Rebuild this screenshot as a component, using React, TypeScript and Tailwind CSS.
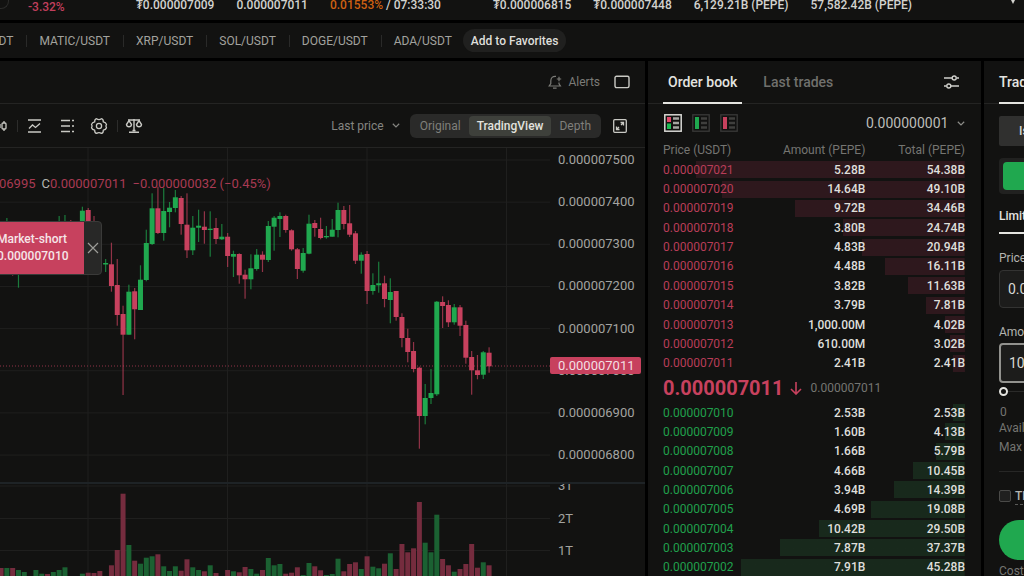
import React from 'react';

type Side = 'r' | 'g';
// index, side, high, low, body top, body bottom
type Candle = [number, Side, number, number, number, number];
// index, side, top of the bar
type Volume = [number, Side, number];
// price, amount, total
type Level = [string, string, string];

const STEP = 5.81;
const ORIGIN = 88.2;
const DEPTH_SCALE = 61.1;

const tickers = [
  { value: '₮0.000007009', width: 'min-w-[77px]' },
  { value: '0.000007011', width: 'min-w-[69px]' },
  { value: '0.01553%', extra: ' / 07:33:30', width: 'min-w-[141px]' },
  { value: '₮0.000006815', width: 'min-w-[77px]' },
  { value: '₮0.000007448', width: 'min-w-[77px]' },
  { value: '6,129.21B (PEPE)', width: 'min-w-[93px]' },
  { value: '57,582.42B (PEPE)', width: 'min-w-[99px]' },
];

const pairs = ['ETH/USDT', 'MATIC/USDT', 'XRP/USDT', 'SOL/USDT', 'DOGE/USDT', 'ADA/USDT'];

const candles: Candle[] = [
  [-14, 'g', 218, 240, 226, 236], [-13, 'r', 240, 275.7, 246, 262], [-12, 'g', 240, 287.7, 246, 262],
  [-5, 'g', 216, 250, 226, 240], [-4, 'g', 215, 250, 226, 240], [-3, 'r', 220, 250, 226, 240],
  [-1, 'g', 206.7, 240, 210.7, 230], [0, 'r', 208, 250, 210, 240], [1, 'r', 216, 262, 226, 250],
  [3, 'g', 259, 272, 263, 264.5], [4, 'r', 242.7, 291.7, 264.3, 286], [5, 'r', 259, 325.7, 285, 315],
  [6, 'r', 305.7, 395, 314, 334.7], [7, 'g', 284.7, 334.7, 291.7, 334.7], [8, 'r', 288, 339.3, 291.3, 309.3],
  [9, 'g', 265.3, 310, 279.7, 310], [10, 'g', 229.7, 281.3, 243, 280], [11, 'g', 193.3, 245, 208.3, 244],
  [12, 'r', 186.7, 234, 208.3, 233], [13, 'g', 188, 240.7, 211, 233], [14, 'g', 202, 227.3, 207.7, 212],
  [15, 'g', 190, 212.3, 197.3, 208], [16, 'r', 196, 234.7, 198, 224], [17, 'r', 193.3, 258, 224.7, 250.3],
  [18, 'g', 216, 255, 227.7, 250.3], [19, 'g', 209.7, 242, 225.7, 227.7], [20, 'r', 211.3, 243.7, 226.7, 230],
  [21, 'g', 211.3, 256.7, 228.7, 230], [22, 'r', 218, 244, 228, 239], [23, 'g', 224, 240, 236.7, 239.3],
  [24, 'r', 233, 267, 236.7, 256], [25, 'g', 250.7, 277, 254, 256.7], [26, 'r', 253.3, 283.7, 254, 275.3],
  [27, 'r', 269.7, 298.7, 274.7, 279.3], [28, 'g', 254.3, 289.3, 268.3, 279.3], [29, 'g', 249, 270.7, 254.7, 269],
  [30, 'r', 251.3, 272, 254.7, 259.7], [31, 'g', 221, 262, 226, 260], [32, 'g', 216, 250.7, 217.7, 226.7],
  [33, 'g', 212.3, 237, 216, 219], [34, 'r', 214.7, 232.7, 216, 230], [35, 'r', 229.3, 250.7, 230.3, 249.3],
  [36, 'r', 248, 279, 249.3, 269], [37, 'g', 248, 272.7, 253, 270.7], [38, 'g', 214.7, 254.3, 223.7, 253.7],
  [39, 'r', 220, 236.7, 223, 228], [40, 'r', 217.7, 239.3, 229, 238], [41, 'g', 226, 238.7, 236, 237.3],
  [42, 'g', 219, 236.7, 229.7, 236.7], [43, 'g', 202.7, 237.3, 210, 230], [44, 'r', 206, 229.3, 210, 224],
  [45, 'r', 205, 237, 223.3, 234.7], [46, 'r', 231, 264, 233.3, 260.7], [47, 'g', 252.3, 273.7, 254.7, 260.7],
  [48, 'r', 251, 304, 254, 291], [49, 'g', 273.3, 294.7, 285, 291], [50, 'g', 261.7, 292.7, 283.3, 285.3],
  [51, 'r', 275.7, 307.3, 283.3, 299], [52, 'g', 278.3, 323.3, 292, 300], [53, 'r', 291, 320.7, 291, 317],
  [54, 'r', 313.3, 347.3, 317, 338], [55, 'r', 328.7, 362.3, 338, 352], [56, 'r', 342, 372.3, 351, 369],
  [57, 'r', 366.7, 448.7, 367.7, 416], [58, 'g', 384, 424.3, 398, 416], [59, 'g', 369, 404, 393, 398],
  [60, 'g', 301, 396, 301.7, 394.3], [61, 'r', 296.3, 328, 302, 306], [62, 'r', 300.3, 327, 305, 322.3],
  [63, 'g', 304, 324.7, 307.3, 322.3], [64, 'r', 305, 336, 307.3, 325.7], [65, 'r', 320.7, 363.7, 325, 357.7],
  [66, 'r', 351, 394.7, 357, 370.3], [67, 'r', 355, 379.3, 370.3, 375], [68, 'g', 351, 379, 352.3, 374.7],
  [69, 'r', 347.3, 372.7, 352.7, 366.3],
];

const volumes: Volume[] = [
  [-15, 'r', 568], [-14, 'g', 568], [-13, 'r', 568], [-12, 'g', 570], [-11, 'g', 572], [-9, 'g', 570],
  [-8, 'g', 573.7], [-7, 'r', 574], [-6, 'g', 572], [-5, 'g', 570], [-4, 'g', 567.3], [-1, 'g', 573.7],
  [0, 'r', 572.7], [1, 'r', 573], [2, 'r', 571], [4, 'r', 565.3], [5, 'r', 550], [6, 'r', 493.7],
  [7, 'g', 545], [8, 'r', 560.7], [9, 'g', 563.7], [10, 'g', 557.7], [11, 'g', 556.3], [12, 'r', 554.3],
  [13, 'g', 566.3], [14, 'g', 571], [15, 'g', 566.3], [16, 'r', 570.7], [17, 'r', 559.3], [18, 'g', 567.3],
  [19, 'g', 570], [20, 'r', 571.3], [21, 'g', 565.3], [22, 'r', 573], [24, 'r', 570], [25, 'g', 571.3],
  [26, 'r', 572.3], [27, 'r', 567], [28, 'g', 569], [29, 'g', 573.7], [30, 'r', 570], [31, 'g', 558],
  [32, 'g', 565.3], [33, 'g', 564], [34, 'r', 573.7], [35, 'r', 572.7], [36, 'r', 567.3], [37, 'g', 575],
  [38, 'g', 563], [39, 'r', 566.3], [40, 'r', 570.3], [41, 'g', 575], [42, 'g', 574], [43, 'g', 558.7],
  [44, 'r', 571.3], [45, 'r', 564], [46, 'r', 562.3], [47, 'g', 569], [48, 'r', 556.3], [49, 'g', 566.7],
  [50, 'g', 568.3], [51, 'r', 563.7], [52, 'g', 553.3], [53, 'r', 569], [54, 'r', 544], [55, 'r', 552.3],
  [56, 'r', 548.3], [57, 'r', 502], [58, 'g', 542.7], [59, 'g', 552.3], [60, 'g', 514.7], [61, 'r', 559],
  [62, 'r', 565.3], [63, 'g', 571.7], [64, 'r', 569], [65, 'r', 564], [66, 'r', 544], [67, 'r', 567.7],
  [68, 'g', 562.3], [69, 'r', 565.3],
];

const priceAxis = [7500, 7400, 7300, 7200, 7100, 7000, 6900, 6800];

const asks: Level[] = [
  ['0.000007021', '5.28B', '54.38B'],
  ['0.000007020', '14.64B', '49.10B'],
  ['0.000007019', '9.72B', '34.46B'],
  ['0.000007018', '3.80B', '24.74B'],
  ['0.000007017', '4.83B', '20.94B'],
  ['0.000007016', '4.48B', '16.11B'],
  ['0.000007015', '3.82B', '11.63B'],
  ['0.000007014', '3.79B', '7.81B'],
  ['0.000007013', '1,000.00M', '4.02B'],
  ['0.000007012', '610.00M', '3.02B'],
  ['0.000007011', '2.41B', '2.41B'],
];

const bids: Level[] = [
  ['0.000007010', '2.53B', '2.53B'],
  ['0.000007009', '1.60B', '4.13B'],
  ['0.000007008', '1.66B', '5.79B'],
  ['0.000007007', '4.66B', '10.45B'],
  ['0.000007006', '3.94B', '14.39B'],
  ['0.000007005', '4.69B', '19.08B'],
  ['0.000007004', '10.42B', '29.50B'],
  ['0.000007003', '7.87B', '37.37B'],
  ['0.000007002', '7.91B', '45.28B'],
];

const xOf = (i: number) => ORIGIN + STEP * i;

function ChevronDown({ className }: { className?: string }) {
  return (
    <svg className={className} width="8" height="5" viewBox="0 0 8 5" fill="none" stroke="currentColor" strokeWidth="1.2">
      <path d="M0.8 0.8 L4 3.9 L7.2 0.8" />
    </svg>
  );
}

function VerticalGrid({ top, bottom }: { top: number; bottom: number }) {
  return (
    <>
      {[88, 227.5, 367, 506.5].map((x) => (
        <line key={x} x1={x} x2={x} y1={top} y2={bottom} stroke="#1f1f1e" />
      ))}
    </>
  );
}

function TickerBar() {
  return (
    <header className="flex h-5 items-start gap-[22px] overflow-hidden bg-[#121211] text-xs font-medium leading-[10px] text-[#d3d3cf]">
      <div className="flex w-[114px] shrink-0 items-start gap-[19px]">
        <div className="h-[9px] w-[9px] rounded-br-lg border-r border-b border-[#2b2b2a]" />
        <span className="leading-[14px] text-[#c23f5d]">-3.32%</span>
      </div>
      {tickers.map((t) => (
        <div key={t.value} className={`${t.width} shrink-0 whitespace-nowrap`}>
          <span className={t.extra ? 'text-[#cf6112]' : ''}>{t.value}</span>
          {t.extra}
        </div>
      ))}
      <svg className="mr-2 ml-auto" width="6" height="4" viewBox="0 0 6 4" fill="#d3d3cf">
        <path d="M1 0 H5 L3 4 Z" />
      </svg>
    </header>
  );
}

function PairsBar() {
  return (
    <nav className="flex h-[35px] items-center overflow-hidden bg-[#121211] text-xs text-[#a2a29e]">
      <div className="-ml-[45px] flex items-center">
        {pairs.map((p, i) => (
          <React.Fragment key={p}>
            {i > 0 && <span className="mr-[11px] ml-3 h-3 w-px bg-[#2a2a29]" />}
            <a href="#" className="px-px">{p}</a>
          </React.Fragment>
        ))}
      </div>
      <button className="ml-[10px] h-[23px] rounded-full bg-[#20201f] px-2 text-xs font-medium text-[#dededa]">
        Add to Favorites
      </button>
    </nav>
  );
}

function ChartToolbar() {
  return (
    <div className="flex h-11 items-center border-b border-[#242423] text-[#c9c9c4]">
      <button aria-label="Candles">
        <svg width="8" height="16" viewBox="0 0 8 16" fill="none" stroke="currentColor" strokeWidth="1.3">
          <path d="M4 3V5M4 11V13" />
          <rect x="2" y="5" width="4" height="6" rx="1" />
          <path d="M0 6V10" />
        </svg>
      </button>
      <span className="ml-[9px] h-3 w-px bg-[#2c2c2b]" />
      <button aria-label="Indicators" className="ml-[9px]">
        <svg width="16" height="16" viewBox="0 0 16 16" fill="none" stroke="currentColor" strokeWidth="1.3">
          <path d="M1 2H14M1 14H14M2 10.5L5.5 7L8.5 9.5L13 5.5" />
        </svg>
      </button>
      <button aria-label="Templates" className="ml-4">
        <svg width="16" height="16" viewBox="0 0 16 16" fill="none" stroke="currentColor" strokeWidth="1.3">
          <path d="M2 2.5H11M2 8H11M2 13.5H11M13 2.5H15M13 8H15M13 13.5H15" />
        </svg>
      </button>
      <button aria-label="Chart settings" className="ml-[15px]">
        <svg width="18" height="18" viewBox="0 0 18 18" fill="none" stroke="currentColor" strokeWidth="1.3" strokeLinejoin="round">
          <path d="M6.6 1.7Q9 3.4 11.4 1.7Q13.4 2 13.3 4.9Q15.8 5.4 16.5 7.4Q15.3 9 16.5 10.8Q15.8 12.8 13.3 13.2Q13.4 16 11.4 16.4Q9 14.7 6.6 16.4Q4.6 16 4.7 13.2Q2.2 12.8 1.5 10.8Q2.7 9 1.5 7.4Q2.2 5.4 4.7 4.9Q4.6 2 6.6 1.7Z" />
          <circle cx="9" cy="9" r="2.6" />
        </svg>
      </button>
      <span className="ml-[9px] h-3 w-px bg-[#2c2c2b]" />
      <button aria-label="Compare" className="ml-[7px]">
        <svg width="18" height="16" viewBox="0 0 18 16" fill="none" stroke="currentColor" strokeWidth="1.4">
          <path d="M3 2H15M9 1V13M4 14.2H14M7.5 12.5H10.5" />
          <path d="M4 2.6L1.5 6.5Q1.7 8.8 4 8.8Q6.3 8.8 6.5 6.5ZM14 2.6L11.5 6.5Q11.7 8.8 14 8.8Q16.3 8.8 16.5 6.5Z" />
        </svg>
      </button>
      <button className="ml-auto flex items-center gap-2 text-xs text-[#858581]">
        Last price
        <ChevronDown />
      </button>
      <div className="ml-[10px] flex h-6 items-center rounded-md bg-[#2a2a29] p-[2px] text-xs text-[#7f7f7b]">
        <button className="px-2">Original</button>
        <button className="h-5 rounded bg-[#3e403b] px-2 font-medium text-[#e2e2de]">TradingView</button>
        <button className="px-2">Depth</button>
      </div>
      <button aria-label="Expand" className="mr-[18px] ml-3">
        <svg width="14" height="14" viewBox="0 0 14 14" fill="none" stroke="currentColor" strokeWidth="1.3">
          <rect x="0.7" y="0.7" width="12.6" height="12.6" rx="1" />
          <path d="M8 6L10.5 3.5M7.5 3.5H10.5V6.5M6 8L3.5 10.5M3.5 7.5V10.5H6.5" />
        </svg>
      </button>
    </div>
  );
}

function PriceChart() {
  return (
    <div className="relative flex h-[334px] shrink-0 overflow-hidden">
      <svg className="h-full min-w-0 flex-1" viewBox="0 148 550 334" preserveAspectRatio="xMaxYMin slice">
        {priceAxis.map((p, i) => (
          <line key={p} x1="0" x2="550" y1={160 + i * 42.15} y2={160 + i * 42.15} stroke="#1f1f1e" />
        ))}
        <VerticalGrid top={148} bottom={482} />
        <line x1="0" x2="550" y1="366" y2="366" stroke="#8f3348" strokeDasharray="1 2" />
        {candles.map(([i, side, high, low, top, bottom]) => {
          const color = side === 'g' ? '#20a84f' : '#c7415e';
          return (
            <g key={i} fill={color}>
              <rect x={xOf(i) - 0.6} y={high} width="1.2" height={low - high} opacity="0.7" />
              <rect x={xOf(i) - 2.5} y={top} width="5" height={bottom - top} />
            </g>
          );
        })}
      </svg>
      <div className="flex h-[315px] w-[95px] shrink-0 flex-col justify-between pt-1 pl-2 text-[13px] leading-4 text-[#a3a3a0]">
        {priceAxis.map((p) => (
          <span key={p}>0.00000{p}</span>
        ))}
      </div>
      <span className="absolute top-[209px] right-1 h-[17px] w-[91px] rounded-xs bg-[#c7415e] pl-2 text-[13px] leading-[17px] text-[#f3dfe3]">
        0.000007011
      </span>
      <div className="absolute top-7 left-0 -ml-[41px] flex gap-[6px] text-[13px] leading-4 whitespace-nowrap text-[#a93a53]">
        <span>0.000006995</span>
        <span><span className="text-[#b5b5b1]">C</span>0.000007011</span>
        <span>−0.000000032 (−0.45%)</span>
      </div>
      <div className="absolute top-[73px] -left-3 flex h-[54px] rounded-r border border-[#3a3a39] bg-[#282827]">
        <div className="flex w-[95px] flex-col justify-center bg-[#c7415e] pl-2 text-xs leading-[17px] font-medium text-[#f6e6e9]">
          <span>Market-short</span>
          <span>0.000007010</span>
        </div>
        <button aria-label="Close position" className="flex w-[17px] items-center justify-center text-[#9c9c98]">
          <svg width="12" height="12" viewBox="0 0 12 12" stroke="currentColor" strokeWidth="1.2">
            <path d="M1 1L11 11M11 1L1 11" />
          </svg>
        </button>
      </div>
    </div>
  );
}

function VolumeChart() {
  return (
    <div className="flex h-[92px] overflow-hidden border-t-2 border-[#1e2326] box-content">
      <svg className="h-full min-w-0 flex-1" viewBox="0 484 550 92" preserveAspectRatio="xMaxYMin slice">
        {[486, 518.5, 550.5].map((y) => (
          <line key={y} x1="0" x2="550" y1={y} y2={y} stroke="#1f1f1e" />
        ))}
        <VerticalGrid top={484} bottom={576} />
        {volumes.map(([i, side, top]) => (
          <rect key={i} x={xOf(i) - 2.5} y={top} width="5" height={576 - top} fill={side === 'g' ? '#1b6132' : '#752c3e'} />
        ))}
      </svg>
      <div className="-mt-[6px] flex h-[81px] w-[95px] shrink-0 flex-col justify-between pl-2 text-[13px] leading-4 text-[#a3a3a0]">
        <span>3T</span>
        <span>2T</span>
        <span>1T</span>
      </div>
    </div>
  );
}

function ChartPanel() {
  return (
    <section className="flex min-w-0 flex-1 flex-col overflow-hidden bg-[#121211]">
      <div className="flex h-[43px] shrink-0 items-center justify-end border-b border-[#242423] pr-[15px]">
        <button className="flex items-center gap-[6px] text-xs text-[#7b7b77]">
          <svg width="14" height="14" viewBox="0 0 14 14" fill="none" stroke="currentColor" strokeWidth="1.2">
            <path d="M8 1.4Q2.8 1 2.8 6V8.6L1.2 11H12.4L11 8.8V7.5M5 13.2H8.6M11 1.8V6.2M8.8 4H13.2" />
          </svg>
          Alerts
        </button>
        <button aria-label="Layout" className="ml-[14px] text-[#c9c9c4]">
          <svg width="16" height="14" viewBox="0 0 16 14" fill="none" stroke="currentColor" strokeWidth="1.4">
            <rect x="1" y="1.2" width="14" height="11.4" rx="1.5" />
          </svg>
        </button>
      </div>
      <ChartToolbar />
      <PriceChart />
      <VolumeChart />
    </section>
  );
}

function BookRows({ levels, side }: { levels: Level[]; side: 'ask' | 'bid' }) {
  const bar = side === 'ask' ? 'from-[#2e181d] to-[#2e181d]' : 'from-[#18291c] to-[#18291c]';
  const price = side === 'ask' ? 'text-[#b93d58]' : 'text-[#20a04c]';

  return (
    <tbody>
      {levels.map(([p, amount, total]) => (
        <tr
          key={p}
          className={`bg-linear-to-r ${bar} bg-[position:right_center] bg-no-repeat`}
          style={{ backgroundSize: `${(parseFloat(total) / DEPTH_SCALE) * 100}% 17px` }}
        >
          <td className={`p-0 text-left ${price}`}>{p}</td>
          <td className="p-0 font-medium">{amount}</td>
          <td className="p-0 font-medium">{total}</td>
        </tr>
      ))}
    </tbody>
  );
}

function BookCols() {
  return (
    <colgroup>
      <col className="w-[34%]" />
      <col className="w-[33%]" />
      <col className="w-[33%]" />
    </colgroup>
  );
}

function OrderBook() {
  return (
    <section className="flex w-[333px] shrink-0 flex-col overflow-hidden bg-[#121211]">
      <div className="flex h-[43px] shrink-0 items-stretch border-b border-[#242423] px-[15px] text-sm font-medium">
        <button className="-mb-px border-b-2 border-[#e4e4e0] px-[5px] text-[#e4e4e0]">Order book</button>
        <button className="ml-[21px] text-[#70706d]">Last trades</button>
        <button aria-label="Book settings" className="mr-[6px] ml-auto text-[#d0d0cc]">
          <svg width="17" height="16" viewBox="0 0 17 16" fill="none" stroke="currentColor" strokeWidth="1.4">
            <path d="M1 4H9M13.5 4H16M1 12H3.5M8 12H16" />
            <circle cx="11.2" cy="4" r="2" />
            <circle cx="5.8" cy="12" r="2" />
          </svg>
        </button>
      </div>
      <div className="flex h-9 shrink-0 items-center gap-[10px] px-4 pt-[2px]">
        <button aria-label="Book and depth">
          <svg width="18" height="18" viewBox="0 0 18 18">
            <rect x="0.8" y="0.8" width="16.4" height="16.4" fill="none" stroke="#d8d8d4" strokeWidth="1.5" />
            <rect x="3" y="3" width="4" height="5" fill="#e2486b" />
            <rect x="3" y="9.5" width="4" height="5.5" fill="#1dbb53" />
            <path d="M9 4.5H15M9 9H15M9 13.5H15" stroke="#a5a5a1" strokeWidth="2.6" />
          </svg>
        </button>
        <button aria-label="Bids only">
          <svg width="18" height="18" viewBox="0 0 18 18">
            <rect x="0.8" y="0.8" width="16.4" height="16.4" fill="none" stroke="#3a3a39" strokeWidth="1.3" />
            <rect x="3" y="3" width="4" height="12" fill="#1fa84f" />
            <path d="M9 4.5H15M9 9H15M9 13.5H15" stroke="#3f3f3d" strokeWidth="2.6" />
          </svg>
        </button>
        <button aria-label="Asks only">
          <svg width="18" height="18" viewBox="0 0 18 18">
            <rect x="0.8" y="0.8" width="16.4" height="16.4" fill="none" stroke="#3a3a39" strokeWidth="1.3" />
            <rect x="3" y="3" width="4" height="12" fill="#c7415e" />
            <path d="M9 4.5H15M9 9H15M9 13.5H15" stroke="#3f3f3d" strokeWidth="2.6" />
          </svg>
        </button>
        <label className="ml-auto flex items-center gap-2 text-[#8d8d89]">
          <select aria-label="Price precision" className="appearance-none bg-transparent text-sm text-[#bcbcb8]">
            <option>0.000000001</option>
          </select>
          <ChevronDown />
        </label>
      </div>
      <table className="mr-4 ml-[15px] h-[233px] table-fixed shrink-0 text-right text-xs leading-4 text-[#dfdfdb]">
        <BookCols />
        <thead>
          <tr className="h-5 text-[#757571]">
            <th className="p-0 text-left font-normal">Price (USDT)</th>
            <th className="p-0 font-normal">Amount (PEPE)</th>
            <th className="p-0 font-normal">Total (PEPE)</th>
          </tr>
        </thead>
        <BookRows levels={asks} side="ask" />
      </table>
      <div className="flex h-[30px] shrink-0 items-center px-[15px]">
        <span className="text-xl font-bold text-[#c7415e]">0.000007011</span>
        <svg className="ml-[5px]" width="14" height="14" viewBox="0 0 14 14" fill="none" stroke="#c7415e" strokeWidth="1.6">
          <path d="M7 1V13M2 8L7 13L12 8" />
        </svg>
        <span className="ml-2 text-xs text-[#757571]">0.000007011</span>
      </div>
      <table className="mr-4 ml-[15px] h-[174px] table-fixed shrink-0 text-right text-xs leading-4 text-[#dfdfdb]">
        <BookCols />
        <BookRows levels={bids} side="bid" />
      </table>
    </section>
  );
}

function TradePanel() {
  return (
    <section className="w-10 shrink-0 overflow-hidden bg-[#121211]">
      <div className="flex w-[280px] flex-col text-xs text-[#b4b4b0]">
        <div className="flex h-[43px] border-b border-[#242423] px-[15px]">
          <button className="-mb-px border-b-2 border-[#e4e4e0] text-sm font-medium text-[#e4e4e0]">Trade</button>
        </div>
        <div className="flex flex-col px-[15px]">
          <button className="mt-3 h-[30px] w-[120px] rounded-xs bg-[#30302f] pl-5 text-left font-medium text-[#d9d9d5]">Isolated</button>
          <div className="mt-3 h-9 rounded bg-[#212120] p-1">
            <button aria-label="Buy" className="block h-7 w-[120px] rounded bg-[#20a84f]" />
          </div>
          <div className="mt-[13px] flex">
            <button className="h-[27px] border-b-2 border-[#e4e4e0] pb-2 font-medium text-[#e4e4e0]">Limit</button>
          </div>
          <label htmlFor="price" className="mt-4 leading-4">Price</label>
          <input id="price" defaultValue="0.000007011" className="mt-1 h-[38px] rounded border border-[#333332] bg-[#1c1c1b] px-2 text-sm text-[#d9d9d5]" />
          <label htmlFor="amount" className="mt-4 leading-4">Amount</label>
          <input id="amount" defaultValue="10000" className="mt-[3px] h-10 rounded border-2 border-[#92928e] bg-[#1c1c1b] px-2 text-sm text-[#d9d9d5]" />
          <input
            type="range"
            aria-label="Amount percent"
            defaultValue={0}
            className="mt-1 h-[9px] appearance-none bg-linear-to-b from-[#2a2a29] to-[#2a2a29] bg-[length:100%_1px] bg-center bg-no-repeat [&::-webkit-slider-thumb]:h-[9px] [&::-webkit-slider-thumb]:w-[9px] [&::-webkit-slider-thumb]:appearance-none [&::-webkit-slider-thumb]:rounded-full [&::-webkit-slider-thumb]:border-2 [&::-webkit-slider-thumb]:border-[#e4e4e0] [&::-webkit-slider-thumb]:bg-[#121211]"
          />
          <span className="mt-2 pl-px leading-4 text-[#757571]">0</span>
          <span className="leading-4 text-[#757571]">Available</span>
          <span className="mt-[3px] leading-4 text-[#757571]">Max</span>
          <hr className="mt-4 border-[#272726]" />
          <label className="mt-4 flex h-4 items-center gap-1 font-medium">
            <input type="checkbox" className="h-3 w-3 appearance-none rounded-xs border border-[#4a4a48] bg-[#20201f]" />
            <span className="border-b border-dashed border-[#5a5a58]">TP/SL</span>
          </label>
          <button aria-label="Open long" className="mt-4 h-10 shrink-0 rounded-full bg-[#20a84f]" />
          <span className="mt-[3px] leading-4 text-[#757571]">Cost</span>
        </div>
      </div>
    </section>
  );
}

export default function App() {
  return (
    <div className="flex h-screen flex-col gap-[3px] overflow-hidden bg-black font-[Roboto,'Noto_Sans',sans-serif]">
      <TickerBar />
      <PairsBar />
      <main className="flex min-h-0 flex-1 gap-[3px]">
        <ChartPanel />
        <OrderBook />
        <TradePanel />
      </main>
    </div>
  );
}
